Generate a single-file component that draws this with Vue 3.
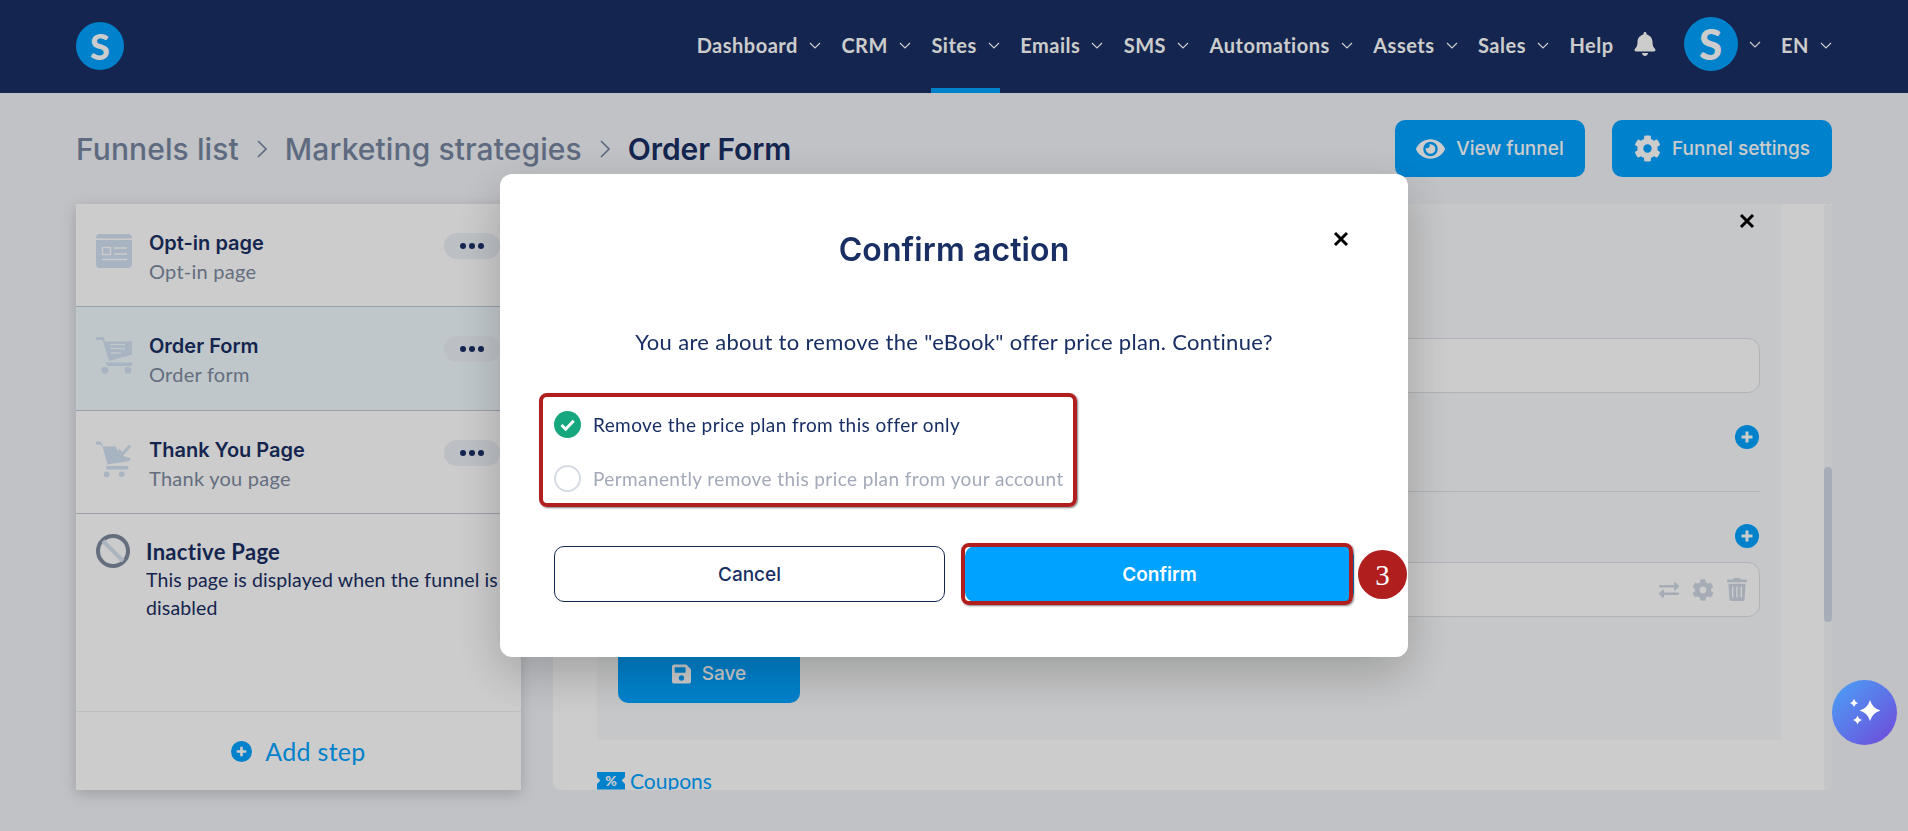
<template>
  <div class="page">
    <header class="topbar">
      <div class="logo"><span>S</span></div>
      <nav class="nav">
        <a v-for="item in navItems" :key="item" :class="['nav-item', { active: item === 'Sites' }]">
          {{ item }}
          <svg class="chev" viewBox="0 0 12 7"><path d="M1 1l5 5 5-5" /></svg>
        </a>
        <a class="nav-item">Help</a>
        <svg class="bell" viewBox="0 0 448 512"><path d="M224 512c35.32 0 63.97-28.65 63.97-64H160.03c0 35.35 28.65 64 63.97 64zm215.39-149.71c-19.32-20.76-55.47-51.99-55.47-154.29 0-77.7-54.48-139.9-127.94-155.16V32c0-17.67-14.32-32-31.98-32s-31.98 14.33-31.98 32v20.84C118.56 68.1 64.08 130.3 64.08 208c0 102.3-36.15 133.53-55.47 154.29-6 6.45-8.66 14.16-8.61 21.71.11 16.4 12.98 32 32.1 32h383.8c19.12 0 32-15.6 32.1-32 .05-7.55-2.61-15.27-8.61-21.71z" /></svg>
        <div class="avatar-wrap">
          <div class="avatar"><span>S</span></div>
          <svg class="chev" viewBox="0 0 12 7"><path d="M1 1l5 5 5-5" /></svg>
        </div>
        <a class="nav-item">
          EN
          <svg class="chev" viewBox="0 0 12 7"><path d="M1 1l5 5 5-5" /></svg>
        </a>
      </nav>
    </header>

    <main class="content">
      <div class="toolbar">
        <div class="crumbs">
          <span>Funnels list</span>
          <svg class="crumb-sep" viewBox="0 0 10 18"><path d="M1 1l8 8-8 8" /></svg>
          <span>Marketing strategies</span>
          <svg class="crumb-sep" viewBox="0 0 10 18"><path d="M1 1l8 8-8 8" /></svg>
          <span class="current">Order Form</span>
        </div>
        <div class="actions">
          <button class="btn-primary view">
            <svg class="eye" viewBox="0 0 576 512"><path d="M572.52 241.4C518.29 135.59 410.93 64 288 64S57.68 135.64 3.48 241.41a32.35 32.35 0 0 0 0 29.19C57.71 376.41 165.07 448 288 448s230.32-71.64 284.52-177.41a32.35 32.35 0 0 0 0-29.19zM288 400a144 144 0 1 1 144-144 143.93 143.93 0 0 1-144 144zm0-240a95.31 95.31 0 0 0-25.31 3.79 47.85 47.85 0 0 1-66.9 66.9A95.78 95.78 0 1 0 288 160z" /></svg>
            View funnel
          </button>
          <button class="btn-primary settings">
            <svg class="cog" viewBox="0 0 512 512"><path :d="cogPath" /></svg>
            Funnel settings
          </button>
        </div>
      </div>

      <div class="workspace">
        <aside class="sidebar">
          <div v-for="step in steps" :key="step.title" :class="['step', { selected: step.selected }]">
            <div class="step-icon">
              <svg v-if="step.icon === 'page'" viewBox="0 0 36 34">
                <path class="ico" d="M4 0h28a4 4 0 0 1 4 4v.5H0V4a4 4 0 0 1 4-4zM0 6h36v24a4 4 0 0 1-4 4H4a4 4 0 0 1-4-4z" />
                <rect class="ico-line" x="6.500" y="13.500" width="8" height="7" />
                <path class="ico-line" d="M18 14h13M18 20h13M6 25.500h25" />
              </svg>
              <svg v-else-if="step.icon === 'cart'" viewBox="0 0 36 37">
                <path class="ico" d="M0 0h7.500L9 4.500h27v13l-23 6.500L7 4 6 3H0z" />
                <path class="ico" d="M9.500 25.500H36V29H11z" />
                <path class="ico-line" d="M14.500 7.500H29M14.500 11.500H29M14.500 16H25" />
                <circle class="ico" cx="9" cy="33.300" r="3.500" />
                <circle class="ico" cx="32" cy="33.300" r="3.500" />
              </svg>
              <svg v-else viewBox="0 0 36 37">
                <path class="ico" d="M0 .5h3c2 0 3.500 1.500 4 5h13c1 6 7 11 14.500 11.500L33.500 20l-22 3.500L7 7C6.500 5 5.500 3.500 3 3.500H0z" />
                <rect class="ico" x="10" y="25" width="22.500" height="3.500" rx="1.700" />
                <path class="ico-stroke" d="M22.300 9l4 4.300L34 4.700" />
                <circle class="ico" cx="10.700" cy="33.300" r="2.800" />
                <circle class="ico" cx="25.700" cy="33.300" r="2.800" />
              </svg>
            </div>
            <div class="step-text">
              <div class="step-title">{{ step.title }}</div>
              <div class="step-sub">{{ step.sub }}</div>
            </div>
            <button class="dots"><i></i><i></i><i></i></button>
          </div>

          <div class="inactive">
            <svg class="ban" viewBox="0 0 34 34">
              <circle cx="17" cy="17" r="15" />
              <path class="ban-slash" d="M7 7l20 20" />
            </svg>
            <div class="inactive-text">
              <div class="inactive-title">Inactive Page</div>
              <p>This page is displayed when the funnel is disabled</p>
            </div>
          </div>

          <div class="add-step">
            <svg class="plus" viewBox="0 0 24 24"><circle cx="12" cy="12" r="12" /><path d="M12 6.500v11M6.500 12h11" /></svg>
            Add step
          </div>
        </aside>

        <section class="panel">
          <div class="panel-body">
            <div class="offer">
              <div class="offer-close">
                <svg class="x" viewBox="0 0 16 16"><path d="M2 2l12 12M14 2L2 14" /></svg>
              </div>
              <div class="field first"></div>
              <div class="plus-row">
                <svg class="plus small" viewBox="0 0 24 24"><circle cx="12" cy="12" r="12" /><path d="M12 6.500v11M6.500 12h11" /></svg>
              </div>
              <div class="divider"></div>
              <div class="plus-row second">
                <svg class="plus small" viewBox="0 0 24 24"><circle cx="12" cy="12" r="12" /><path d="M12 6.500v11M6.500 12h11" /></svg>
              </div>
              <div class="field second-field">
                <svg class="tool swap" viewBox="0 0 512 512"><path d="M0 168v-16c0-13.255 10.745-24 24-24h360V80c0-21.367 25.899-32.042 40.971-16.971l80 80c9.372 9.373 9.372 24.569 0 33.941l-80 80C409.956 271.982 384 261.456 384 240v-48H24c-13.255 0-24-10.745-24-24zm488 152H128v-48c0-21.314-25.862-32.08-40.971-16.971l-80 80c-9.372 9.373-9.372 24.569 0 33.941l80 80C102.057 463.997 128 453.437 128 432v-48h360c13.255 0 24-10.745 24-24v-16c0-13.255-10.745-24-24-24z" /></svg>
                <svg class="tool" viewBox="0 0 512 512"><path :d="cogPath" /></svg>
                <svg class="tool trash" viewBox="0 0 448 512"><path d="M432 32H312l-9-19A24 24 0 0 0 281 0H167a24 24 0 0 0-21 13l-9 19H16A16 16 0 0 0 0 48v32a16 16 0 0 0 16 16h416a16 16 0 0 0 16-16V48a16 16 0 0 0-16-16zM53 467a48 48 0 0 0 48 45h246a48 48 0 0 0 48-45l21-339H32zm251-267a16 16 0 0 1 32 0v224a16 16 0 0 1-32 0zm-96 0a16 16 0 0 1 32 0v224a16 16 0 0 1-32 0zm-96 0a16 16 0 0 1 32 0v224a16 16 0 0 1-32 0z" /></svg>
              </div>
              <button class="btn-primary save">
                <svg class="floppy" viewBox="0 0 448 512"><path d="M433.941 129.941l-83.882-83.882A48 48 0 0 0 316.118 32H48C21.49 32 0 53.49 0 80v352c0 26.51 21.49 48 48 48h352c26.51 0 48-21.49 48-48V163.882a48 48 0 0 0-14.059-33.941zM224 416c-35.346 0-64-28.654-64-64 0-35.346 28.654-64 64-64s64 28.654 64 64c0 35.346-28.654 64-64 64zm96-304.520V212c0 6.627-5.373 12-12 12H76c-6.627 0-12-5.373-12-12V108c0-6.627 5.373-12 12-12h228.520c3.183 0 6.235 1.264 8.485 3.515l3.480 3.480A11.996 11.996 0 0 1 320 111.480z" /></svg>
                Save
              </button>
            </div>
            <div class="coupons">
              <span class="coupon-icon">%</span>
              Coupons
            </div>
          </div>
          <div class="scrollbar"><div class="thumb"></div></div>
        </section>
      </div>
    </main>

    <div class="backdrop">
      <div class="modal">
        <button class="modal-close">
          <svg class="x" viewBox="0 0 16 16"><path d="M2 2l12 12M14 2L2 14" /></svg>
        </button>
        <h2>Confirm action</h2>
        <p class="question">You are about to remove the "eBook" offer price plan. Continue?</p>

        <div class="options">
          <div class="option">
            <svg class="check" viewBox="0 0 27 27"><circle cx="13.500" cy="13.500" r="13.500" /><path d="M7.500 14l4.200 4.200 8-8.500" /></svg>
            Remove the price plan from this offer only
          </div>
          <div class="option off">
            <span class="radio"></span>
            Permanently remove this price plan from your account
          </div>
          <div class="mark options-mark"></div>
        </div>

        <div class="modal-buttons">
          <button class="cancel">Cancel</button>
          <button class="confirm">
            Confirm
            <span class="mark confirm-mark"></span>
            <span class="badge">3</span>
          </button>
        </div>
      </div>
    </div>

    <button class="spark">
      <svg viewBox="0 0 65 65">
        <path d="M38 20Q40.500 28.500 48.500 30.500 40.500 32.500 38 41 35.500 32.500 27.500 30.500 35.500 28.500 38 20z" />
        <path d="M22 19Q23 22 26 23 23 24 22 27 21 24 18 23 21 22 22 19zM25.500 35.500Q26.500 39 30 40 26.500 41 25.500 44.500 24.500 41 21 40 24.500 39 25.500 35.500z" />
      </svg>
    </button>
  </div>
</template>

<script setup>
const navItems = ['Dashboard', 'CRM', 'Sites', 'Emails', 'SMS', 'Automations', 'Assets', 'Sales']

const steps = [
  { title: 'Opt-in page', sub: 'Opt-in page', icon: 'page' },
  { title: 'Order Form', sub: 'Order form', icon: 'cart', selected: true },
  { title: 'Thank You Page', sub: 'Thank you page', icon: 'thanks' }
]

const cogPath = 'M487.4 315.7l-42.6-24.6c4.3-23.2 4.3-47 0-70.2l42.6-24.6c4.9-2.8 7.1-8.6 5.5-14-11.1-35.6-30-67.8-54.7-94.6-3.8-4.1-10-5.1-14.8-2.3L380.8 110c-17.9-15.4-38.5-27.3-60.8-35.1V25.8c0-5.6-3.9-10.5-9.4-11.7-36.7-8.2-74.3-7.8-109.2 0-5.5 1.2-9.4 6.1-9.4 11.7V75c-22.2 7.9-42.8 19.8-60.8 35.1L88.7 85.5c-4.9-2.8-11-1.9-14.8 2.3-24.7 26.7-43.6 58.9-54.7 94.6-1.7 5.4.6 11.2 5.5 14L67.3 221c-4.3 23.2-4.3 47 0 70.2l-42.6 24.6c-4.9 2.8-7.1 8.6-5.5 14 11.1 35.6 30 67.8 54.7 94.6 3.8 4.1 10 5.1 14.8 2.3l42.6-24.6c17.9 15.4 38.5 27.3 60.8 35.1v49.2c0 5.6 3.9 10.5 9.4 11.7 36.7 8.2 74.3 7.8 109.2 0 5.5-1.2 9.4-6.1 9.4-11.7v-49.2c22.2-7.9 42.8-19.8 60.8-35.1l42.6 24.6c4.9 2.8 11 1.9 14.8-2.3 24.7-26.7 43.6-58.9 54.7-94.6 1.5-5.5-.7-11.3-5.6-14.1zM256 336c-44.1 0-80-35.9-80-80s35.9-80 80-80 80 35.9 80 80-35.9 80-80 80z'
</script>

<style>
html,
body {
  margin: 0;
  overflow: hidden;
  background: #f1f3f8;
}
</style>

<style scoped>
.page {
  height: 831px;
  background: #f1f3f8;
  font-family: Lato, 'Open Sans', sans-serif;
  color: #192f63;
  overflow: hidden;
}

button {
  font-family: Inter, sans-serif;
  border: none;
  cursor: pointer;
}

/* top bar */
.topbar {
  height: 93px;
  background: #192f63;
  display: flex;
  align-items: stretch;
  justify-content: space-between;
  padding: 0 76px;
}

.logo {
  align-self: center;
  margin-top: -1px;
  width: 48px;
  height: 48px;
  border-radius: 50%;
  background: #00a2ff;
  color: #fff;
  display: flex;
  align-items: center;
  justify-content: center;
  font-weight: 900;
  font-size: 36px;
}

.nav {
  display: flex;
  align-items: stretch;
  gap: 20.5px;
}

.nav-item {
  display: flex;
  align-items: center;
  gap: 11px;
  color: #fff;
  font-size: 20px;
  font-weight: 700;
  letter-spacing: 0.5px;
  padding-top: 2px;
  border-bottom: 5px solid transparent;
  box-sizing: border-box;
  height: 93px;
}

.nav-item.active {
  border-bottom-color: #00a2ff;
}

.chev {
  width: 12px;
  height: 7px;
  fill: none;
  stroke: #fff;
  stroke-width: 1.2;
}

.bell {
  width: 24px;
  height: 24px;
  align-self: center;
  margin-left: -1px;
  fill: #fff;
  margin-top: -5px;
}

.avatar-wrap {
  display: flex;
  align-items: center;
  gap: 11px;
  margin-left: 6px;
  margin-top: -5px;
}

.avatar {
  width: 54px;
  height: 54px;
  border-radius: 50%;
  background: #00a2ff;
  color: #fff;
  display: flex;
  align-items: center;
  justify-content: center;
  font-weight: 900;
  font-size: 42px;
}

/* breadcrumb row */
.content {
  padding: 27px 76px 0;
}

.toolbar {
  display: flex;
  justify-content: space-between;
  align-items: center;
  height: 57px;
  margin-bottom: 27px;
}

.crumbs {
  display: flex;
  align-items: center;
  gap: 18px;
  color: #76859f;
  font-family: Inter, sans-serif;
  font-size: 30px;
  font-weight: 500;
  letter-spacing: 0.1px;
}

.crumb-sep {
  width: 10px;
  height: 18px;
  fill: none;
  stroke: #76859f;
  stroke-width: 1.6;
}

.current {
  color: #192f63;
  font-weight: 600;
  letter-spacing: -0.1px;
}

.actions {
  display: flex;
  gap: 27px;
}

.btn-primary {
  background: #00a2ff;
  color: #fff;
  border-radius: 10px;
  height: 57px;
  display: flex;
  align-items: center;
  justify-content: center;
  font-size: 19px;
  font-weight: 500;
}

.view {
  width: 190px;
  gap: 11px;
}

.settings {
  width: 220px;
  gap: 11px;
}

.eye {
  width: 29px;
  height: 26px;
  fill: #fff;
}

.cog {
  width: 27px;
  height: 27px;
  fill: #fff;
}

/* sidebar */
.workspace {
  display: flex;
  gap: 32px;
  height: 586px;
}

.sidebar {
  width: 445px;
  flex-shrink: 0;
  background: #fff;
  display: flex;
  flex-direction: column;
  box-shadow: 0 4px 14px rgba(0, 0, 0, 0.18);
}

.step {
  height: 103.3px;
  flex-shrink: 0;
  border-bottom: 1px solid #c3c8d2;
  display: flex;
  padding: 29px 21px 0 20px;
  box-sizing: border-box;
}

.step.selected {
  background: #f0f9fe;
}

.step-icon {
  width: 36px;
  margin-right: 17px;
  padding-top: 1px;
}

.step-icon svg {
  display: block;
  width: 36px;
}

.ico {
  fill: #d3e1f2;
}

.ico-line {
  stroke: #fff;
  stroke-width: 1.4;
  fill: none;
}

.selected .ico-line {
  stroke: #f0f9fe;
}

.ico-stroke {
  stroke: #d3e1f2;
  stroke-width: 3;
  fill: none;
}

.step-text {
  flex: 1;
}

.step-title {
  font-family: Inter, sans-serif;
  font-size: 20px;
  font-weight: 600;
  line-height: 24px;
  margin-top: -2px;
}

.step-sub {
  margin-top: 4px;
  color: #7d8a9f;
  font-size: 20px;
  line-height: 24px;
  letter-spacing: 0.25px;
}

.dots {
  width: 56px;
  height: 26px;
  border-radius: 13px;
  background: #ecf0f6;
  display: flex;
  align-items: center;
  justify-content: center;
  gap: 3px;
  padding: 0;
}

.dots i {
  width: 6px;
  height: 6px;
  border-radius: 50%;
  background: #192f63;
}

.inactive {
  flex: 1;
  display: flex;
  gap: 16px;
  padding: 20px 0 0 20px;
  border-bottom: 1px solid #eceef2;
}

.ban {
  width: 34px;
  height: 34px;
  flex-shrink: 0;
  fill: none;
  stroke: #7d8a9f;
  stroke-width: 4;
}

.ban-slash {
  stroke: #d6e0ee;
}

.inactive-title {
  font-size: 22px;
  font-weight: 700;
  line-height: 28px;
  margin-top: 4px;
  letter-spacing: 0.3px;
}

.inactive-text p {
  margin: 0;
  width: 364px;
  font-size: 19.5px;
  line-height: 28px;
  letter-spacing: 0.12px;
}

.add-step {
  height: 78px;
  display: flex;
  align-items: center;
  justify-content: center;
  gap: 13px;
  color: #00a2ff;
  font-size: 25px;
  letter-spacing: 0.3px;
  flex-shrink: 0;
}

.plus {
  width: 21px;
  height: 21px;
}

.plus.small {
  width: 24px;
  height: 24px;
}

.plus circle {
  fill: #00a2ff;
}

.plus path {
  stroke: #fff;
  stroke-width: 3;
}

/* main panel */
.panel {
  flex: 1;
  background: #fff;
  display: flex;
  border-radius: 0 0 8px 8px;
  overflow: hidden;
}

.panel-body {
  flex: 1;
  padding: 0 43px 0 44px;
  overflow: hidden;
}

.offer {
  height: 536px;
  background: #f8f9fa;
  padding: 0 21px;
  display: flex;
  flex-direction: column;
}

.offer-close {
  display: flex;
  justify-content: flex-end;
  padding: 9px 5px 0 0;
  height: 25px;
}

.x {
  width: 16px;
  height: 16px;
  fill: none;
  stroke: #000;
  stroke-width: 3;
}

.field {
  height: 55px;
  box-sizing: border-box;
  border: 1px solid #dde0e6;
  border-radius: 12px;
  background: #fff;
}

.first {
  margin-top: 100px;
}

.plus-row {
  display: flex;
  justify-content: flex-end;
  margin-top: 32px;
  padding-right: 1px;
}

.plus-row.second {
  margin-top: 32px;
}

.divider {
  height: 1px;
  background: #dde0e6;
  margin-top: 42px;
}

.second-field {
  margin-top: 14px;
  display: flex;
  align-items: center;
  justify-content: flex-end;
  gap: 13px;
  padding-right: 12px;
}

.tool {
  width: 22px;
  height: 22px;
  fill: #d0d8e4;
}

.swap {
  width: 20px;
}

.trash {
  width: 20px;
  height: 23px;
}

.save {
  width: 182px;
  height: 59px;
  margin-top: 27px;
  gap: 11px;
}

.floppy {
  width: 19px;
  height: 22px;
  fill: #fff;
}

.coupons {
  display: flex;
  align-items: center;
  gap: 5px;
  color: #00a2ff;
  font-size: 21px;
  margin-top: 28px;
}

.coupon-icon {
  width: 28px;
  height: 18px;
  background: #00a2ff;
  color: #fff;
  font-size: 14px;
  font-weight: 900;
  text-align: center;
  line-height: 18px;
  clip-path: polygon(0 0, 100% 0, 100% 30%, 88% 50%, 100% 70%, 100% 100%, 0 100%, 0 70%, 12% 50%, 0 30%);
}

.scrollbar {
  width: 8px;
  background: #f6f7f9;
  border-radius: 4px;
  flex-shrink: 0;
  padding-top: 263px;
  box-sizing: border-box;
}

.thumb {
  height: 155px;
  border-radius: 4px;
  background: #d0d8e6;
}

/* dialog */
.backdrop {
  position: fixed;
  inset: 0;
  background: rgba(0, 0, 0, 0.2);
  display: flex;
  align-items: center;
  justify-content: center;
}

.modal {
  position: relative;
  width: 908px;
  height: 483px;
  box-sizing: border-box;
  padding: 56px 54px 55px;
  background: #fff;
  border-radius: 12px;
  box-shadow: 0 16px 48px rgba(0, 0, 0, 0.22);
}

.modal-close {
  position: absolute;
  top: 57px;
  right: 59px;
  padding: 0;
  background: none;
  line-height: 0;
}

.modal h2 {
  margin: 0;
  text-align: center;
  font-family: Inter, sans-serif;
  font-size: 32px;
  font-weight: 600;
  line-height: 40px;
  letter-spacing: 0.1px;
}

.question {
  margin: 52px 0 0;
  text-align: center;
  font-size: 22px;
  line-height: 40px;
  letter-spacing: 0.32px;
}

.options {
  position: relative;
  margin-top: 49px;
  display: flex;
  flex-direction: column;
  gap: 27px;
}

.option {
  display: flex;
  align-items: center;
  gap: 12px;
  height: 27px;
  font-size: 19px;
  letter-spacing: 0.4px;
}

.option.off {
  color: #a3a9b8;
}

.check {
  width: 27px;
  height: 27px;
}

.check circle {
  fill: #17a77f;
}

.check path {
  fill: none;
  stroke: #fff;
  stroke-width: 3;
}

.radio {
  width: 27px;
  height: 27px;
  box-sizing: border-box;
  border: 2px solid #d6dae3;
  border-radius: 50%;
}

.mark {
  position: absolute;
  box-sizing: border-box;
  border: 4px solid #b01e1e;
  border-radius: 8px;
  box-shadow: 1px 1px 2px rgba(0, 0, 0, 0.5);
}

.options-mark {
  left: -15px;
  top: -18px;
  width: 538px;
  height: 114px;
}

.modal-buttons {
  display: flex;
  gap: 20px;
  margin-top: 54px;
}

.cancel,
.confirm {
  position: relative;
  flex: 1;
  height: 56px;
  border-radius: 10px;
  font-size: 19px;
  font-weight: 500;
}

.cancel {
  background: #fff;
  color: #192f63;
  border: 1px solid #14264f;
}

.confirm {
  background: #00a2ff;
  color: #fff;
  font-weight: 600;
}

.confirm-mark {
  left: -4px;
  top: -3px;
  right: 1px;
  bottom: -3px;
}

.badge {
  position: absolute;
  left: 393px;
  top: 4px;
  width: 49px;
  height: 49px;
  border-radius: 50%;
  background: #b01e1e;
  color: #fff;
  font-family: 'Liberation Serif', serif;
  font-size: 29px;
  font-weight: 400;
  line-height: 51px;
  text-align: center;
}

.spark {
  position: fixed;
  left: 1832px;
  top: 680px;
  width: 65px;
  height: 65px;
  padding: 0;
  border-radius: 50%;
  background: linear-gradient(135deg, #4aa3f7, #7048d8);
  display: flex;
}

.spark svg {
  width: 65px;
  height: 65px;
  fill: #fff;
}
</style>
